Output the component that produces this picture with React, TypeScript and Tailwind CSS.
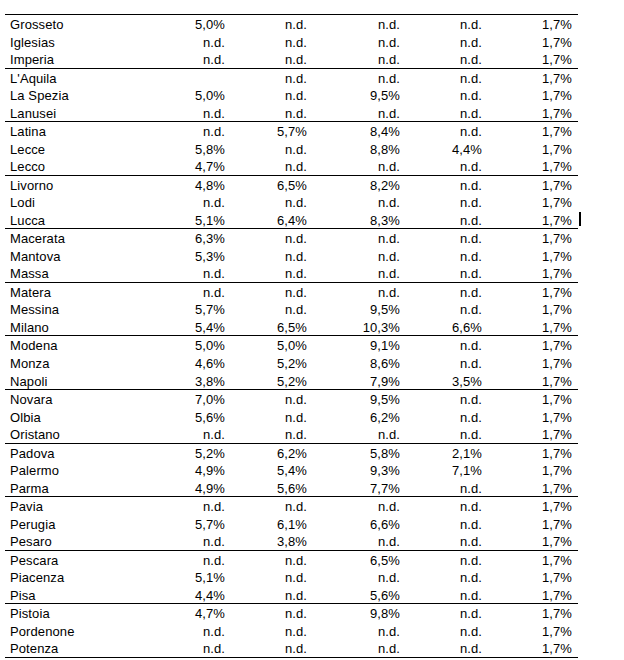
import React from "react";

type Row = [string, string, string, string, string, string];

const rows: Row[] = [
  ["Grosseto", "5,0%", "n.d.", "n.d.", "n.d.", "1,7%"],
  ["Iglesias", "n.d.", "n.d.", "n.d.", "n.d.", "1,7%"],
  ["Imperia", "n.d.", "n.d.", "n.d.", "n.d.", "1,7%"],
  ["L'Aquila", "", "n.d.", "n.d.", "n.d.", "1,7%"],
  ["La Spezia", "5,0%", "n.d.", "9,5%", "n.d.", "1,7%"],
  ["Lanusei", "n.d.", "n.d.", "n.d.", "n.d.", "1,7%"],
  ["Latina", "n.d.", "5,7%", "8,4%", "n.d.", "1,7%"],
  ["Lecce", "5,8%", "n.d.", "8,8%", "4,4%", "1,7%"],
  ["Lecco", "4,7%", "n.d.", "n.d.", "n.d.", "1,7%"],
  ["Livorno", "4,8%", "6,5%", "8,2%", "n.d.", "1,7%"],
  ["Lodi", "n.d.", "n.d.", "n.d.", "n.d.", "1,7%"],
  ["Lucca", "5,1%", "6,4%", "8,3%", "n.d.", "1,7%"],
  ["Macerata", "6,3%", "n.d.", "n.d.", "n.d.", "1,7%"],
  ["Mantova", "5,3%", "n.d.", "n.d.", "n.d.", "1,7%"],
  ["Massa", "n.d.", "n.d.", "n.d.", "n.d.", "1,7%"],
  ["Matera", "n.d.", "n.d.", "n.d.", "n.d.", "1,7%"],
  ["Messina", "5,7%", "n.d.", "9,5%", "n.d.", "1,7%"],
  ["Milano", "5,4%", "6,5%", "10,3%", "6,6%", "1,7%"],
  ["Modena", "5,0%", "5,0%", "9,1%", "n.d.", "1,7%"],
  ["Monza", "4,6%", "5,2%", "8,6%", "n.d.", "1,7%"],
  ["Napoli", "3,8%", "5,2%", "7,9%", "3,5%", "1,7%"],
  ["Novara", "7,0%", "n.d.", "9,5%", "n.d.", "1,7%"],
  ["Olbia", "5,6%", "n.d.", "6,2%", "n.d.", "1,7%"],
  ["Oristano", "n.d.", "n.d.", "n.d.", "n.d.", "1,7%"],
  ["Padova", "5,2%", "6,2%", "5,8%", "2,1%", "1,7%"],
  ["Palermo", "4,9%", "5,4%", "9,3%", "7,1%", "1,7%"],
  ["Parma", "4,9%", "5,6%", "7,7%", "n.d.", "1,7%"],
  ["Pavia", "n.d.", "n.d.", "n.d.", "n.d.", "1,7%"],
  ["Perugia", "5,7%", "6,1%", "6,6%", "n.d.", "1,7%"],
  ["Pesaro", "n.d.", "3,8%", "n.d.", "n.d.", "1,7%"],
  ["Pescara", "n.d.", "n.d.", "6,5%", "n.d.", "1,7%"],
  ["Piacenza", "5,1%", "n.d.", "n.d.", "n.d.", "1,7%"],
  ["Pisa", "4,4%", "n.d.", "5,6%", "n.d.", "1,7%"],
  ["Pistoia", "4,7%", "n.d.", "9,8%", "n.d.", "1,7%"],
  ["Pordenone", "n.d.", "n.d.", "n.d.", "n.d.", "1,7%"],
  ["Potenza", "n.d.", "n.d.", "n.d.", "n.d.", "1,7%"],
];

const groups: Row[][] = [];
for (let i = 0; i < rows.length; i += 3) groups.push(rows.slice(i, i + 3));

function DataRow({ r }: { r: Row }) {
  return (
    <div className="relative flex flex-1 items-center pt-[2px] leading-[15.5px]">
      <div className="w-[140px] pl-[5px]">{r[0]}</div>
      <div className="w-[80px] text-right">{r[1]}</div>
      <div className="w-[82px] text-right">{r[2]}</div>
      <div className="w-[93px] text-right">{r[3]}</div>
      <div className="w-[82px] text-right">{r[4]}</div>
      <div className="w-[90px] text-right">{r[5]}</div>
      {r[0] === "Lucca" && (
        <div className="absolute right-[-3px] top-[1px] h-[14px] w-[2px] bg-black" />
      )}
    </div>
  );
}

export default function App() {
  return (
    <div className="min-h-[660px] w-[624px] bg-white pl-[5px] pt-[14px] text-[13px] tracking-[0.1px] text-black [font-family:'Liberation_Sans',Arial,sans-serif]">
      <div className="w-[573px] border-b border-black">
        {groups.map((g, gi) => (
          <div key={gi} className="flex h-[53.58px] flex-col border-t border-black">
            {g.map((r) => (
              <DataRow key={r[0]} r={r} />
            ))}
          </div>
        ))}
      </div>
    </div>
  );
}
